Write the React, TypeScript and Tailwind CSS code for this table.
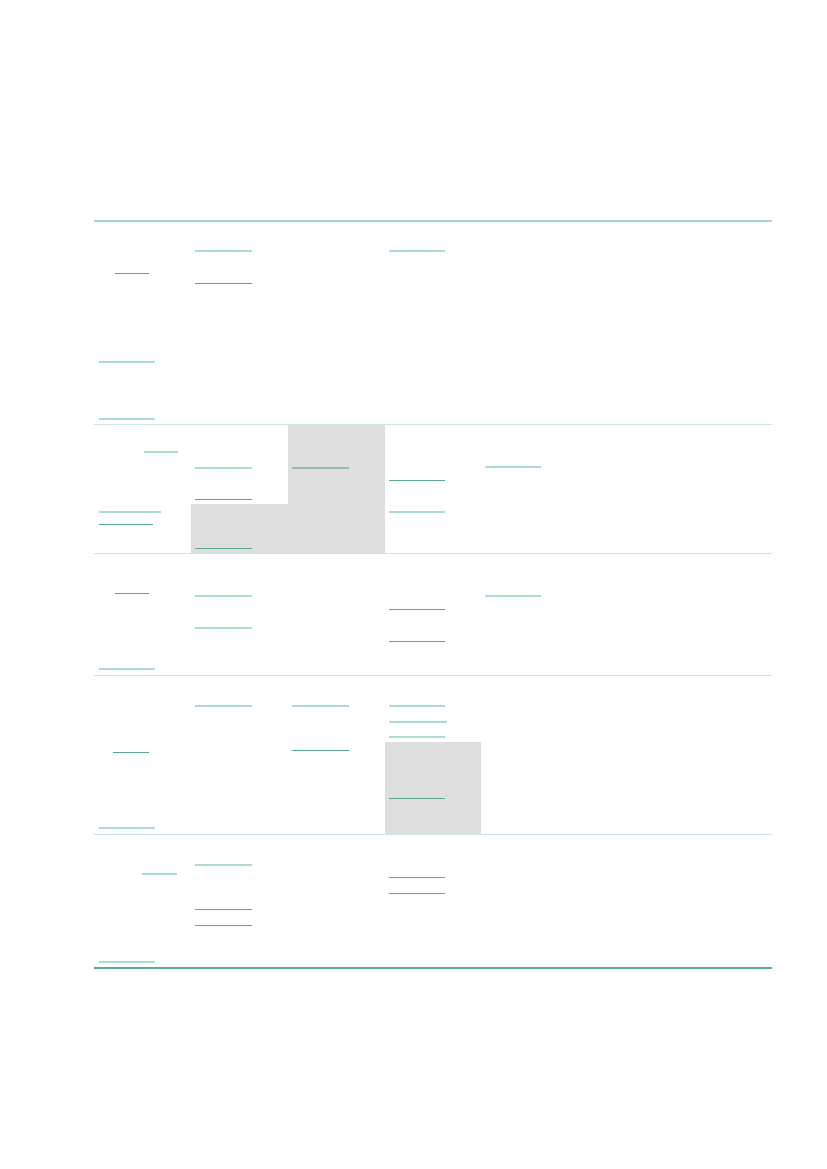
type Tone = "l" | "d" | "g";
type Line = { c: string; t: Tone };
type Cell = { lines?: Line[]; gray?: boolean; split?: { before: Line[]; inside: Line[]; c: string } };

const tone: Record<Tone, string> = {
  l: "h-[2px] bg-[#acdccd]",
  d: "h-px bg-[#55a792]",
  g: "h-[2px] bg-[#93bcad]",
};

function Underline({ line }: { line: Line }) {
  return <div className={`${line.c} ${tone[line.t]}`} />;
}

const rows: { h: string; cells: Cell[] }[] = [
  {
    h: "h-[203px] border-b border-[#cde7df]",
    cells: [
      {
        lines: [
          { c: "mt-[51px] ml-[21px] w-[34px]", t: "d" },
          { c: "mt-[87px] ml-[5px] w-[56px]", t: "l" },
          { c: "mt-[55px] ml-[5px] w-[56px]", t: "l" },
        ],
      },
      {
        lines: [
          { c: "mt-[28px] ml-[4px] w-[57px]", t: "l" },
          { c: "mt-[31px] ml-[4px] w-[57px]", t: "d" },
        ],
      },
      {},
      { lines: [{ c: "mt-[28px] ml-[4px] w-[56px]", t: "l" }] },
      {},
      {},
      {},
    ],
  },
  {
    h: "h-[129px] border-b border-[#cde7df]",
    cells: [
      {
        lines: [
          { c: "mt-[26px] ml-[50px] w-[34px]", t: "l" },
          { c: "mt-[58px] ml-[5px] w-[62px]", t: "l" },
          { c: "mt-[11px] ml-[5px] w-[54px]", t: "d" },
        ],
      },
      {
        split: {
          before: [
            { c: "mt-[42px] ml-[4px] w-[57px]", t: "l" },
            { c: "mt-[30px] ml-[4px] w-[57px]", t: "d" },
          ],
          c: "mt-[4px]",
          inside: [{ c: "mt-[44px] ml-[4px] w-[57px]", t: "d" }],
        },
      },
      { gray: true, lines: [{ c: "mt-[42px] ml-[4px] w-[57px]", t: "g" }] },
      {
        lines: [
          { c: "mt-[55px] ml-[4px] w-[56px]", t: "d" },
          { c: "mt-[30px] ml-[4px] w-[56px]", t: "l" },
        ],
      },
      { lines: [{ c: "mt-[41px] ml-[4px] w-[56px]", t: "l" }] },
      {},
      {},
    ],
  },
  {
    h: "h-[122px] border-b border-[#cde7df]",
    cells: [
      {
        lines: [
          { c: "mt-[39px] ml-[21px] w-[34px]", t: "d" },
          { c: "mt-[74px] ml-[5px] w-[56px]", t: "l" },
        ],
      },
      {
        lines: [
          { c: "mt-[41px] ml-[4px] w-[57px]", t: "l" },
          { c: "mt-[30px] ml-[4px] w-[57px]", t: "l" },
        ],
      },
      {},
      {
        lines: [
          { c: "mt-[55px] ml-[4px] w-[56px]", t: "d" },
          { c: "mt-[31px] ml-[4px] w-[56px]", t: "d" },
        ],
      },
      { lines: [{ c: "mt-[41px] ml-[4px] w-[56px]", t: "l" }] },
      {},
      {},
    ],
  },
  {
    h: "h-[159px] border-b border-[#cde7df]",
    cells: [
      {
        lines: [
          { c: "mt-[76px] ml-[19px] w-[36px]", t: "d" },
          { c: "mt-[74px] ml-[5px] w-[56px]", t: "l" },
        ],
      },
      { lines: [{ c: "mt-[29px] ml-[4px] w-[57px]", t: "l" }] },
      {
        lines: [
          { c: "mt-[29px] ml-[4px] w-[57px]", t: "l" },
          { c: "mt-[43px] ml-[4px] w-[57px]", t: "d" },
        ],
      },
      {
        split: {
          before: [
            { c: "mt-[29px] ml-[4px] w-[56px]", t: "l" },
            { c: "mt-[14px] ml-[4px] w-[58px]", t: "l" },
            { c: "mt-[13px] ml-[4px] w-[56px]", t: "l" },
          ],
          c: "mt-[4px]",
          inside: [{ c: "mt-[56px] ml-[4px] w-[56px]", t: "d" }],
        },
      },
      {},
      {},
      {},
    ],
  },
  {
    h: "h-[134px] border-b-2 border-[#5aa994]",
    cells: [
      {
        lines: [
          { c: "mt-[38px] ml-[48px] w-[35px]", t: "l" },
          { c: "mt-[86px] ml-[5px] w-[56px]", t: "l" },
        ],
      },
      {
        lines: [
          { c: "mt-[29px] ml-[4px] w-[57px]", t: "l" },
          { c: "mt-[43px] ml-[4px] w-[57px]", t: "d" },
          { c: "mt-[15px] ml-[4px] w-[57px]", t: "d" },
        ],
      },
      {},
      {
        lines: [
          { c: "mt-[42px] ml-[4px] w-[56px]", t: "d" },
          { c: "mt-[15px] ml-[4px] w-[56px]", t: "d" },
        ],
      },
      {},
      {},
      {},
    ],
  },
];

function TableCell({ cell }: { cell: Cell }) {
  if (cell.split) {
    return (
      <div className="flex flex-col">
        {cell.split.before.map((l, i) => (
          <Underline key={i} line={l} />
        ))}
        <div className={`${cell.split.c} flex-1 bg-[#dedede]`}>
          {cell.split.inside.map((l, i) => (
            <Underline key={i} line={l} />
          ))}
        </div>
      </div>
    );
  }
  return (
    <div className={`flex flex-col ${cell.gray ? "bg-[#dedede]" : ""}`}>
      {(cell.lines ?? []).map((l, i) => (
        <Underline key={i} line={l} />
      ))}
    </div>
  );
}

export default function App() {
  return (
    <div className="min-h-[1169px] w-[827px] bg-white pt-[220px] pl-[94px] font-['Liberation_Sans',sans-serif]">
      <div className="w-[678px] border-t-2 border-[#a6d6c6]">
        {rows.map((row, r) => (
          <div key={r} className={`grid grid-cols-7 ${row.h}`}>
            {row.cells.map((cell, c) => (
              <TableCell key={c} cell={cell} />
            ))}
          </div>
        ))}
      </div>
    </div>
  );
}
